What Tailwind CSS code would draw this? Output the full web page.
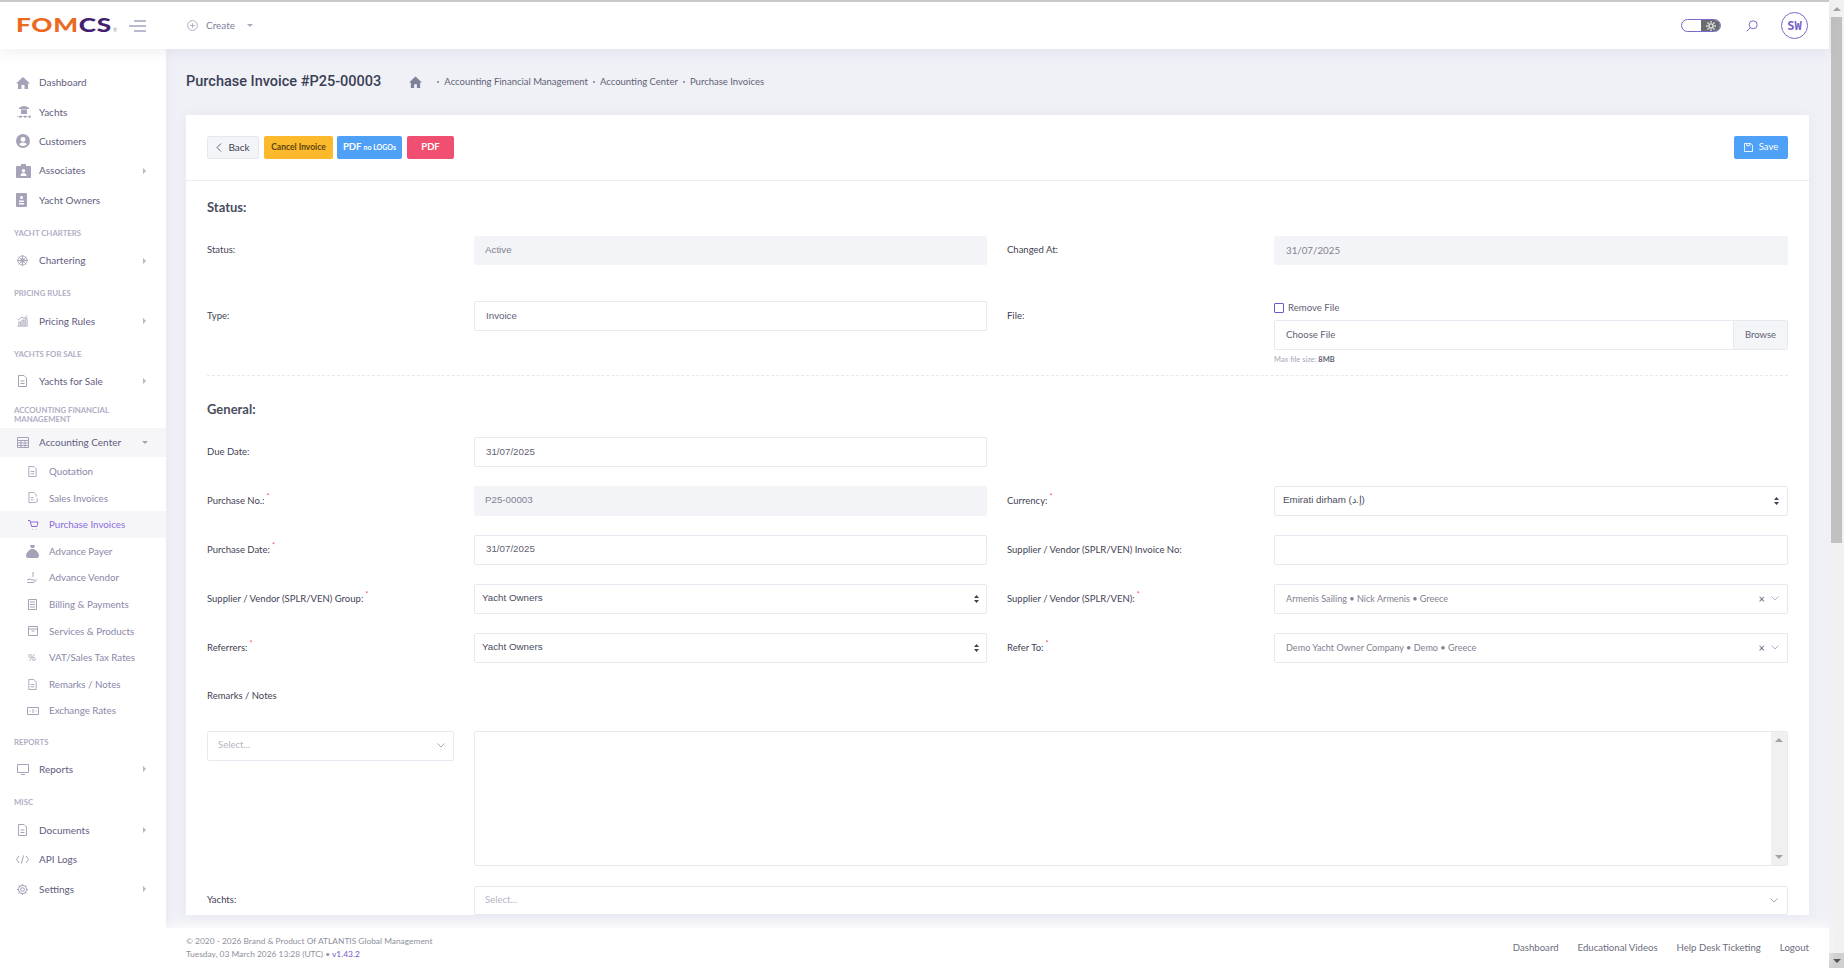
<!DOCTYPE html>
<html><head><meta charset="utf-8"><title>Purchase Invoice</title>
<script src="https://cdn.jsdelivr.net/npm/@tailwindcss/browser@4"></script></head>
<body class="h-[968px] w-[1844px] overflow-hidden bg-white font-[family-name:Lato,sans-serif] text-[9.5px] text-[#3f4254]">
<div class="flex h-[968px]">
<div class="flex w-[1829px] flex-col">
  <header class="relative z-20 flex h-[49px] shrink-0 items-center border-t-2 border-[#c8c8c8] bg-white shadow-[0_4px_12px_rgba(80,80,120,0.08)]">
    <div class="flex w-[129px] items-baseline pl-4 whitespace-nowrap">
      <span class="inline-block w-[97px] origin-left text-[18px] leading-none font-black"><span class="inline-block origin-left scale-x-[1.45] tracking-[0.5px]"><span class="text-[#ea6a1f]">FOM</span><span class="text-[#43206f]">CS</span></span></span>
      <span class="text-[5px] font-normal text-[#9a9ab0]">®</span>
    </div>
    <svg class="h-[12px] w-[18px]" viewBox="0 0 18 12" fill="none" stroke="#6d7a9c" stroke-width="1"><path d="M5 1h12M0 6h17M5 11h12"/></svg>
    <div class="ml-[40px] flex items-center gap-[8px] text-[10px] text-[#7e8299]">
      <svg class="h-[11px] w-[11px]" viewBox="0 0 12 12" fill="none" stroke="#a9a9bd"><circle cx="6" cy="6" r="5.3"/><path d="M6 3.5v5M3.5 6h5"/></svg>
      <span>Create</span><span class="ml-1 h-0 w-0 border-x-[3px] border-t-[3px] border-x-transparent border-t-[#a9a9bd]"></span>
    </div>
    <div class="ml-auto flex items-center pr-[21px]">
      <div class="flex h-[13px] w-[40px] overflow-hidden rounded-full border border-[#7b68c8] bg-white">
        <div class="ml-auto flex w-[19px] items-center justify-center bg-[#686d72]"><svg class="h-[10px] w-[10px]" viewBox="0 0 12 12" fill="none" stroke="#e8e8e8" stroke-width="1.6"><circle cx="6" cy="6" r="2.5"/><path d="M6 0v2M6 10v2M0 6h2M10 6h2M1.8 1.8l1.4 1.4M8.8 8.8l1.4 1.4M1.8 10.2l1.4-1.4M8.8 3.2l1.4-1.4"/></svg></div>
      </div>
      <svg class="ml-[25px] h-[12px] w-[12px]" viewBox="0 0 12 12" fill="none" stroke="#8068c8"><circle cx="7.2" cy="4.8" r="4"/><path d="M4.3 7.7L.6 11.4"/></svg>
      <div class="ml-[23px] flex h-[27px] w-[27px] items-center justify-center rounded-full border border-[#7b68c8] font-[family-name:'DejaVu_Sans_Mono',monospace] text-[12px] font-bold text-[#7560c4]">SW</div>
    </div>
  </header>
  <div class="flex min-h-0 flex-1">
    <aside class="relative z-10 w-[166px] shrink-0 bg-white pt-[19px] text-[10px] text-[#5f5c7e] shadow-[2px_0_8px_rgba(80,80,120,0.04)]">
      <a class="flex h-[29.4px] items-center pl-[16px]"><svg class="mr-[9px] h-[14px] w-[14px]" viewBox="0 0 14 14" fill="#a5a3b8"><path d="M7 1L0 7.5h2V13h3.5V9h3v4H12V7.5h2z"/></svg>Dashboard</a>
      <a class="flex h-[29.4px] items-center pl-[16px]"><svg class="mr-[7px] h-[14px] w-[16px]" viewBox="0 0 16 14" fill="#a5a3b8"><path d="M3 3q5-4 10 0v1H3zM5 4.500h6V9H5zM1 11q1.200 1 2.300 0t2.300 0 2.400 0 2.400 0 2.300 0 2.300 0v1.300q-1.200 1-2.300 0t-2.300 0-2.400 0-2.400 0-2.300 0-2.300 0z"/></svg>Yachts</a>
      <a class="flex h-[29.4px] items-center pl-[16px]"><svg class="mr-[9px] h-[14px] w-[14px]" viewBox="0 0 14 14" fill="#a5a3b8"><path d="M7 0a7 7 0 100 14A7 7 0 007 0zm0 3a2.4 2.4 0 110 4.8A2.4 2.4 0 017 3zm0 9a5.5 5.5 0 01-4-1.8Q4 8.500 7 8.500t4 1.700A5.500 5.500 0 017 12z"/></svg>Customers</a>
      <a class="flex h-[29.4px] items-center pl-[16px]"><svg class="mr-[8px] h-[14px] w-[15px]" viewBox="0 0 15 14" fill="#a5a3b8"><path d="M1 2h4V0h5v2h4q1 0 1 1v10q0 1-1 1H1q-1 0-1-1V3q0-1 1-1zm6.500 3a1.700 1.700 0 100 3.400 1.700 1.700 0 000-3.400zM4.500 12h6q0-3-3-3t-3 3z"/></svg>Associates<span class="mr-[20px] ml-auto h-0 w-0 border-y-[3.5px] border-l-[3.5px] border-y-transparent border-l-[#b5b5c3]"></span></a>
      <a class="flex h-[29.4px] items-center pl-[16px]"><svg class="mr-[12px] h-[14px] w-[11px]" viewBox="0 0 11 14" fill="#a5a3b8"><path d="M1 0h9q1 0 1 1v12q0 1-1 1H1q-1 0-1-1V1q0-1 1-1zm4.500 3a1.500 1.500 0 100 3 1.500 1.500 0 000-3zM3 9h5V7.500H3zm0 2.500h5V10H3z"/></svg>Yacht Owners</a>

      <div class="flex h-[31px] items-end pb-[8px] pl-[14px] text-[7.8px] leading-[9px] font-bold text-[#b0aec4] uppercase">Yacht Charters</div>
      <a class="flex h-[29.4px] items-center pl-[17px]"><svg class="mr-[11px] h-[11px] w-[11px]" viewBox="0 0 12 12" fill="none" stroke="#a5a3b8"><circle cx="6" cy="6" r="5"/><circle cx="6" cy="6" r="2"/><path d="M6 0v12M0 6h12M1.800 1.800l8.400 8.400M1.800 10.200l8.400-8.400"/></svg>Chartering<span class="mr-[20px] ml-auto h-0 w-0 border-y-[3.5px] border-l-[3.5px] border-y-transparent border-l-[#b5b5c3]"></span></a>

      <div class="flex h-[31px] items-end pb-[8px] pl-[14px] text-[7.8px] leading-[9px] font-bold text-[#b0aec4] uppercase">Pricing Rules</div>
      <a class="flex h-[29.4px] items-center pl-[17px]"><svg class="mr-[11px] h-[12px] w-[11px]" viewBox="0 0 12 12" fill="none" stroke="#a5a3b8"><path d="M.5 11.500h11M2 11V7h2v4M5.500 11V5h2v6M9 11V3h2v8M1 5l4-3 3 1 3-3"/></svg>Pricing Rules<span class="mr-[20px] ml-auto h-0 w-0 border-y-[3.5px] border-l-[3.5px] border-y-transparent border-l-[#b5b5c3]"></span></a>

      <div class="flex h-[31px] items-end pb-[8px] pl-[14px] text-[7.8px] leading-[9px] font-bold text-[#b0aec4] uppercase">Yachts for Sale</div>
      <a class="flex h-[29.4px] items-center pl-[18px]"><svg class="mr-[12px] h-[12px] w-[9px]" viewBox="0 0 9 12" fill="none" stroke="#a5a3b8"><path d="M.5.500h5.500l2.500 2.500v8.500h-8zM2.500 6h4M2.500 8.500h4"/></svg>Yachts for Sale<span class="mr-[20px] ml-auto h-0 w-0 border-y-[3.5px] border-l-[3.5px] border-y-transparent border-l-[#b5b5c3]"></span></a>

      <div class="flex h-[31.5px] items-end pb-[4px] pl-[14px] text-[7.8px] leading-[9px] font-bold text-[#b0aec4] uppercase">Accounting Financial<br>Management</div>
      <a class="flex h-[29.400px] items-center bg-[#f6f6f9] pl-[17px]"><svg class="mr-[10px] h-[11px] w-[12px]" viewBox="0 0 12 11" fill="none" stroke="#a5a3b8"><path d="M.5.500h11v10H.5zM.5 3.500h11M.5 6h11M.5 8.500h11M4 3.500v7M8 3.500v7"/></svg>Accounting Center<span class="mr-[18px] ml-auto h-0 w-0 border-x-[3.5px] border-t-[3.5px] border-x-transparent border-t-[#a5a3b8]"></span></a>
      <div class="pt-px text-[9.75px]">
      <a class="flex h-[26.6px] items-center pl-[28px] text-[#8a87a8]"><svg class="mr-[12px] h-[11px] w-[9px]" viewBox="0 0 9 12" fill="none" stroke="#a5a3b8"><path d="M.5.500h5.500l2.500 2.500v8.500h-8zM2.500 6h4M2.500 8.500h4"/></svg>Quotation</a>
      <a class="flex h-[26.6px] items-center pl-[28px] text-[#8a87a8]"><svg class="mr-[10px] h-[11px] w-[11px]" viewBox="0 0 11 12" fill="none" stroke="#a5a3b8"><path d="M.5.500h5.500l2.500 2.500v2M8.500 11.500h-8V.500M2.500 6h3M2.500 8.500h3M9.500 7v4"/></svg>Sales Invoices</a>
      <a class="flex h-[26.6px] items-center bg-[#f6f6f9] pl-[28px] text-[#8c6bdc]"><svg class="mr-[10px] h-[10px] w-[11px]" viewBox="0 0 11 10" fill="none" stroke="#8c6bdc"><path d="M0 .5h2l1.500 6h5.500l1-4.500H3M4 9.500h.5M8 9.500h.5"/></svg>Purchase Invoices</a>
      <a class="flex h-[26.6px] items-center pl-[26px] text-[#8a87a8]"><svg class="mr-[10px] h-[13px] w-[13px]" viewBox="0 0 13 13" fill="#a5a3b8"><path d="M4 0h5L8 3H5zM5 4h3q5 3 5 7 0 2-2 2H2q-2 0-2-2 0-4 5-7z"/></svg>Advance Payer</a>
      <a class="flex h-[26.6px] items-center pl-[27px] text-[#8a87a8]"><svg class="mr-[11px] h-[11px] w-[11px]" viewBox="0 0 11 11" fill="none" stroke="#a5a3b8"><path d="M6 0v5M0 8q3-2 5 0h3M0 10.500h7l3-3"/></svg>Advance Vendor</a>
      <a class="flex h-[26.6px] items-center pl-[28px] text-[#8a87a8]"><svg class="mr-[12px] h-[11px] w-[9px]" viewBox="0 0 9 11" fill="none" stroke="#a5a3b8"><path d="M.5.500h8v10h-8zM2 3h5M2 5.500h5M2 8h5"/></svg>Billing &amp; Payments</a>
      <a class="flex h-[26.6px] items-center pl-[28px] text-[#8a87a8]"><svg class="mr-[11px] h-[10px] w-[10px]" viewBox="0 0 10 10" fill="none" stroke="#a5a3b8"><path d="M.5.500h9v9h-9zM.5 3h9M3.500 5h3"/></svg>Services &amp; Products</a>
      <a class="flex h-[26.6px] items-center pl-[28px] text-[#8a87a8]"><span class="mr-[11px] w-[10px] text-[#a5a3b8]">%</span>VAT/Sales Tax Rates</a>
      <a class="flex h-[26.6px] items-center pl-[28px] text-[#8a87a8]"><svg class="mr-[12px] h-[11px] w-[9px]" viewBox="0 0 9 12" fill="none" stroke="#a5a3b8"><path d="M.5.500h5.500l2.500 2.500v8.500h-8zM2.500 6h4M2.500 8.500h4"/></svg>Remarks / Notes</a>
      <a class="flex h-[26.6px] items-center pl-[27px] text-[#8a87a8]"><svg class="mr-[10px] h-[8px] w-[12px]" viewBox="0 0 12 8" fill="none" stroke="#a5a3b8"><path d="M.5.500h11v7H.5zM6 2v4M3 3.500v1M9 3.500v1"/></svg>Exchange Rates</a>
      </div>

      <div class="flex h-[30.8px] items-end pb-[8px] pl-[14px] text-[7.8px] leading-[9px] font-bold text-[#b0aec4] uppercase">Reports</div>
      <a class="flex h-[29.400px] items-center pl-[17px]"><svg class="mr-[10px] h-[11px] w-[12px]" viewBox="0 0 12 11" fill="none" stroke="#a5a3b8"><path d="M.5.500h11v8H.5zM4 10.500h4"/></svg>Reports<span class="mr-[20px] ml-auto h-0 w-0 border-y-[3.500px] border-l-[3.500px] border-y-transparent border-l-[#b5b5c3]"></span></a>

      <div class="flex h-[31.6px] items-end pb-[9px] pl-[14px] text-[7.800px] leading-[9px] font-bold text-[#b0aec4] uppercase">Misc</div>
      <a class="flex h-[29.400px] items-center pl-[18px]"><svg class="mr-[12px] h-[12px] w-[9px]" viewBox="0 0 9 12" fill="none" stroke="#a5a3b8"><path d="M.5.500h5.500l2.500 2.500v8.500h-8zM2.500 6h4M2.500 8.500h4"/></svg>Documents<span class="mr-[20px] ml-auto h-0 w-0 border-y-[3.500px] border-l-[3.500px] border-y-transparent border-l-[#b5b5c3]"></span></a>
      <a class="flex h-[29.400px] items-center pl-[16px]"><svg class="mr-[10px] h-[9px] w-[13px]" viewBox="0 0 13 9" fill="none" stroke="#a5a3b8"><path d="M3 1L.5 4.500 3 8M10 1l2.500 3.500L10 8M7.500.5l-2 8"/></svg>API Logs</a>
      <a class="flex h-[29.400px] items-center pl-[17px]"><svg class="mr-[11px] h-[11px] w-[11px]" viewBox="0 0 12 12" fill="none" stroke="#a5a3b8" stroke-width="1.100"><circle cx="6" cy="6" r="2"/><circle cx="6" cy="6" r="4.300"/><path d="M6 0v1.700M6 10.300V12M0 6h1.700M10.300 6H12M1.800 1.800l1.200 1.200M9 9l1.200 1.200M1.800 10.200L3 9M9 3l1.200-1.200"/></svg>Settings<span class="mr-[20px] ml-auto h-0 w-0 border-y-[3.500px] border-l-[3.500px] border-y-transparent border-l-[#b5b5c3]"></span></a>
    </aside>

    <div class="flex min-w-0 flex-1 flex-col">
      <main class="min-h-0 flex-1 overflow-hidden bg-[#f0f1f7] px-[20px]">
        <div class="flex h-[66px] items-center">
          <h1 class="font-[family-name:Roboto,sans-serif] text-[14.5px] font-medium text-[#3a3f55]">Purchase Invoice #P25-00003</h1>
          <svg class="ml-[28px] h-[12px] w-[13px]" viewBox="0 0 14 13" fill="#7e8299"><path d="M7 .5L0 7h2v6h3.500V9h3v4H12V7h2z"/></svg>
          <div class="ml-[15px] flex items-center gap-[5px] text-[9.5px] text-[#5f6275]">
            <span class="h-[2px] w-[2px] rounded-full bg-[#7e8299]"></span><span>Accounting Financial Management</span>
            <span class="h-[2px] w-[2px] rounded-full bg-[#7e8299]"></span><span>Accounting Center</span>
            <span class="h-[2px] w-[2px] rounded-full bg-[#7e8299]"></span><span>Purchase Invoices</span>
          </div>
        </div>
        <section class="bg-white shadow-[0_0_12px_rgba(80,80,140,0.06)]">
          <div class="flex h-[66px] items-center border-b border-[#ecedf3] px-[21px]">
            <button class="flex h-[23px] w-[52px] items-center justify-center gap-[6px] rounded-[2px] border border-[#e6e8ef] bg-[#f4f5f8] text-[10px] text-[#3f4254]"><svg class="h-[9px] w-[6px]" viewBox="0 0 6 9" fill="none" stroke="#5f6275"><path d="M5 .5L1 4.500l4 4"/></svg>Back</button>
            <button class="ml-[5px] h-[23px] w-[69px] rounded-[2px] bg-[#fbb92b] text-[8.5px] font-bold text-[#5c4310]">Cancel Invoice</button>
            <button class="ml-[4px] flex h-[23px] w-[65px] items-center justify-center gap-[2px] rounded-[2px] bg-[#4ea1f7] text-[9.5px] font-bold whitespace-nowrap text-white">PDF <span class="text-[7px]">no LOGOs</span></button>
            <button class="ml-[5px] h-[23px] w-[47px] rounded-[2px] bg-[#f04f71] text-[9.5px] font-bold text-white">PDF</button>
            <button class="ml-auto flex h-[23px] w-[54px] items-center justify-center gap-[6px] rounded-[2px] bg-[#4ea1f7] text-[9.5px] text-white"><svg class="h-[9px] w-[9px]" viewBox="0 0 10 10" fill="none" stroke="#fff"><path d="M.5.500h7l2 2v7h-9zM3 .5v2.500h3.500V.5"/></svg>Save</button>
          </div>
          <div class="px-[21px] pt-[18px]">
            <h2 class="text-[13px] leading-[17px] font-bold text-[#4a4d60]">Status:</h2>
            <div class="mt-[20px] grid grid-cols-[247px_513px_247px_514px] gap-x-[20px]">
              <label class="flex h-[29px] items-center">Status:</label>
              <div class="flex h-[29px] items-center rounded-[2px] bg-[#f3f4f8] px-[11px] font-[family-name:'Liberation_Sans',sans-serif] text-[9.750px] text-[#80828f]">Active</div>
              <label class="flex h-[29px] items-center">Changed At:</label>
              <div class="flex h-[29px] items-center rounded-[2px] bg-[#f3f4f8] px-[12px] text-[9.750px] text-[#80828f]">31/07/2025</div>
            </div>
            <div class="mt-[36px] grid grid-cols-[247px_513px_247px_514px] gap-x-[20px]">
              <label class="flex h-[30px] items-center">Type:</label>
              <div class="flex h-[30px] items-center rounded-[2px] border border-[#e8e9f0] px-[11px] font-[family-name:'Liberation_Sans',sans-serif] text-[9.750px] text-[#5f6275]">Invoice</div>
              <label class="flex h-[30px] items-center">File:</label>
              <div>
                <div class="flex h-[14px] items-center gap-[4px] text-[9.6px] text-[#5f6275]"><span class="-mt-[1px] h-[10px] w-[10px] rounded-[1px] border border-[#6f58c9]"></span>Remove File</div>
                <div class="mt-[5px] flex h-[30px] items-center rounded-[2px] border border-[#e8e9f0]"><span class="pl-[11px] text-[9.6px] text-[#5f6275]">Choose File</span><span class="ml-auto flex h-full w-[54px] items-center justify-center border-l border-[#e8e9f0] bg-[#f4f5f8] text-[9.5px] text-[#5f6275]">Browse</span></div>
                <div class="mt-[5px] text-[7.500px] leading-[10px] text-[#a5a6b5]">Max file size: <b class="text-[#5f6275]">8MB</b></div>
              </div>
            </div>
            <div class="mt-[10px] border-t border-dashed border-[#e8e9f0]"></div>
            <h2 class="mt-[25px] text-[13px] leading-[17px] font-bold text-[#4a4d60]">General:</h2>
            <div class="mt-[19px] grid grid-cols-[247px_513px_247px_514px] gap-x-[20px]">
              <label class="flex h-[30px] items-center">Due Date:</label>
              <div class="flex h-[30px] items-center rounded-[2px] border border-[#e8e9f0] px-[11px] font-[family-name:'Liberation_Sans',sans-serif] text-[9.750px] text-[#5f6275]">31/07/2025</div>
            </div>
            <div class="mt-[19px] grid grid-cols-[247px_513px_247px_514px] gap-x-[20px] gap-y-[19.500px]">
              <label class="flex h-[29.500px] items-center">Purchase No.:<sup class="ml-[2px] text-[#f04f71]">*</sup></label>
              <div class="flex h-[29.500px] items-center rounded-[2px] bg-[#f3f4f8] px-[11px] font-[family-name:'Liberation_Sans',sans-serif] text-[9.750px] text-[#80828f]">P25-00003</div>
              <label class="flex h-[29.500px] items-center">Currency:<sup class="ml-[2px] text-[#f04f71]">*</sup></label>
              <div class="flex h-[29.500px] items-center justify-between rounded-[2px] border border-[#e8e9f0] px-[8px] font-[family-name:'Liberation_Sans',sans-serif] text-[9.750px] text-[#4a4d60]">Emirati dirham (إ.د)<svg class="h-[8px] w-[5px]" viewBox="0 0 5 8" fill="#3f4254"><path d="M2.500 0L5 3H0zM2.500 8L0 5h5z"/></svg></div>

              <label class="flex h-[29.500px] items-center">Purchase Date:<sup class="ml-[2px] text-[#f04f71]">*</sup></label>
              <div class="flex h-[29.500px] items-center rounded-[2px] border border-[#e8e9f0] px-[11px] font-[family-name:'Liberation_Sans',sans-serif] text-[9.750px] text-[#5f6275]">31/07/2025</div>
              <label class="flex h-[29.500px] items-center">Supplier / Vendor (SPLR/VEN) Invoice No:</label>
              <div class="h-[29.500px] rounded-[2px] border border-[#e8e9f0]"></div>

              <label class="flex h-[29.500px] items-center">Supplier / Vendor (SPLR/VEN) Group:<sup class="ml-[2px] text-[#f04f71]">*</sup></label>
              <div class="flex h-[29.500px] items-center justify-between rounded-[2px] border border-[#e8e9f0] px-[7px] font-[family-name:'Liberation_Sans',sans-serif] text-[9.750px] text-[#4a4d60]">Yacht Owners<svg class="h-[8px] w-[5px]" viewBox="0 0 5 8" fill="#3f4254"><path d="M2.500 0L5 3H0zM2.500 8L0 5h5z"/></svg></div>
              <label class="flex h-[29.500px] items-center">Supplier / Vendor (SPLR/VEN):<sup class="ml-[2px] text-[#f04f71]">*</sup></label>
              <div class="flex h-[29.500px] items-center rounded-[2px] border border-[#e8e9f0] pr-[8px] pl-[11px] text-[9.1px] text-[#80828f]">Armenis Sailing • Nick Armenis • Greece<span class="ml-auto text-[11px] text-[#5f6275]">×</span><svg class="ml-[6px] h-[5px] w-[8px]" viewBox="0 0 8 5" fill="none" stroke="#b5b5c3"><path d="M.5.500L4 4 7.500.500"/></svg></div>

              <label class="flex h-[29.500px] items-center">Referrers:<sup class="ml-[2px] text-[#f04f71]">*</sup></label>
              <div class="flex h-[29.500px] items-center justify-between rounded-[2px] border border-[#e8e9f0] px-[7px] font-[family-name:'Liberation_Sans',sans-serif] text-[9.750px] text-[#4a4d60]">Yacht Owners<svg class="h-[8px] w-[5px]" viewBox="0 0 5 8" fill="#3f4254"><path d="M2.500 0L5 3H0zM2.500 8L0 5h5z"/></svg></div>
              <label class="flex h-[29.500px] items-center">Refer To:<sup class="ml-[2px] text-[#f04f71]">*</sup></label>
              <div class="flex h-[29.500px] items-center rounded-[2px] border border-[#e8e9f0] pr-[8px] pl-[11px] text-[9.1px] text-[#80828f]">Demo Yacht Owner Company • Demo • Greece<span class="ml-auto text-[11px] text-[#5f6275]">×</span><svg class="ml-[6px] h-[5px] w-[8px]" viewBox="0 0 8 5" fill="none" stroke="#b5b5c3"><path d="M.5.500L4 4 7.500.500"/></svg></div>
            </div>
            <div class="mt-[26px] h-[14px] leading-[14px]">Remarks / Notes</div>
            <div class="mt-[28px] grid grid-cols-[247px_1314px] gap-x-[20px]">
              <div class="flex h-[30px] items-center justify-between rounded-[2px] border border-[#e8e9f0] pr-[8px] pl-[10px] text-[9.5px] text-[#b5b5c3]">Select...<svg class="h-[5px] w-[8px]" viewBox="0 0 8 5" fill="none" stroke="#a5a6b5"><path d="M.5.500L4 4 7.500.500"/></svg></div>
              <div class="flex h-[135px] justify-end rounded-[2px] border border-[#e8e9f0]">
                <div class="flex w-[16px] flex-col items-center justify-between bg-[#f0f0f0] py-[6px]"><span class="h-0 w-0 border-x-[4px] border-b-[4px] border-x-transparent border-b-[#a3a3a3]"></span><span class="h-0 w-0 border-x-[4px] border-t-[4px] border-x-transparent border-t-[#a3a3a3]"></span></div>
              </div>
            </div>
            <div class="mt-[20px] grid grid-cols-[247px_1314px] gap-x-[20px]">
              <label class="flex h-[29px] items-center">Yachts:</label>
              <div class="flex h-[29px] items-center justify-between rounded-[2px] border border-[#e8e9f0] pr-[9px] pl-[10px] text-[9.5px] text-[#b5b5c3]">Select...<svg class="h-[5px] w-[8px]" viewBox="0 0 8 5" fill="none" stroke="#a5a6b5"><path d="M.5.500L4 4 7.500.500"/></svg></div>
            </div>
          </div>
        </section>
      </main>
      <footer class="relative z-10 flex h-[40px] shrink-0 items-center justify-between bg-white px-[20px] text-[#8e8f9d] shadow-[0_-4px_8px_rgba(255,255,255,0.7)]">
        <div class="text-[8.4px] leading-[13px]">© 2020 - 2026 Brand &amp; Product Of ATLANTIS Global Management<br>Tuesday, 03 March 2026 13:28 (UTC) • <span class="text-[#6f58c9]">v1.43.2</span></div>
        <nav class="flex gap-[19px] text-[9.6px] text-[#6b6d7c]"><a>Dashboard</a><a>Educational Videos</a><a>Help Desk Ticketing</a><a>Logout</a></nav>
      </footer>
    </div>
  </div>
</div>
<div class="flex w-[15px] shrink-0 flex-col items-center bg-[#f1f1f1]">
  <div class="flex h-[17px] items-center justify-center"><span class="h-0 w-0 border-x-[4px] border-b-[4px] border-x-transparent border-b-[#a3a3a3]"></span></div>
  <div class="h-[526px] w-[11px] bg-[#c1c1c1]"></div>
  <div class="mt-auto flex h-[15px] w-full items-center justify-center bg-[#d0d0d0]"><span class="h-0 w-0 border-x-[4px] border-t-[4px] border-x-transparent border-t-[#505050]"></span></div>
</div>
</div>
</body></html>
